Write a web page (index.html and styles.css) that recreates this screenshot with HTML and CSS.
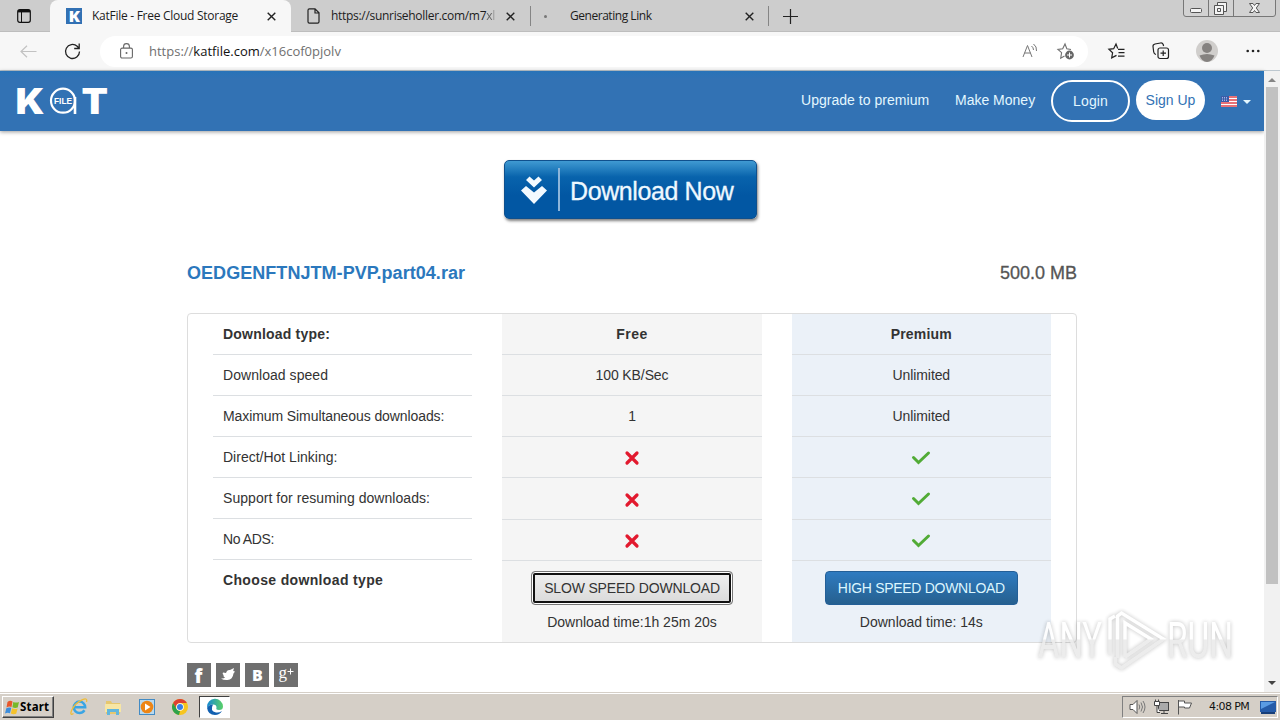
FILE: index.html
```html
<!DOCTYPE html>
<html lang="en">
<head>
<meta charset="utf-8">
<title>KatFile - Free Cloud Storage</title>
<link rel="stylesheet" href="styles.css">
</head>
<body>
<div class="tabstrip">
  <svg class="tab-actions" width="14" height="14" viewBox="0 0 14 14"><rect x=".7" y=".7" width="12.600" height="12.600" rx="2" fill="none" stroke="#111" stroke-width="1.200"/><path d="M1 2.200h12" stroke="#111" stroke-width="2.400"/><path d="M4.500 3v10" stroke="#111" stroke-width="1"/></svg>
  <div class="tab tab-active">
    <svg class="favicon" width="16" height="16" viewBox="0 0 16 16"><rect width="16" height="16" fill="#3271b4"/><text x="2.400" y="14" font-family="Open Sans" font-weight="800" font-size="16" textLength="11.500" lengthAdjust="spacingAndGlyphs" fill="#fff">K</text></svg>
    <span class="tab-title t1">KatFile - Free Cloud Storage</span>
    <svg class="x" width="9" height="9" viewBox="0 0 9 9"><path d="M.7.7l7.6 7.6M8.3.7L.7 8.3"/></svg>
  </div>
  <div class="tab tab-two">
    <svg class="favicon doc" width="13" height="16" viewBox="0 0 13 16"><path d="M1 2.2Q1 .8 2.400.8H8l4 4v9q0 1.400-1.400 1.400H2.400Q1 15.200 1 13.800zM8 1v4h4" fill="none" stroke="#222" stroke-width="1.200"/></svg>
    <span class="tab-title t2">https://sunriseholler.com/m7<span class="fade1">x</span><span class="fade2">l</span></span>
    <svg class="x" width="9" height="9" viewBox="0 0 9 9"><path d="M.7.7l7.6 7.6M8.3.7L.7 8.3"/></svg>
  </div>
  <div class="tab tab-three">
    <span class="loading-dot"></span>
    <span class="tab-title t3">Generating Link</span>
    <svg class="x" width="9" height="9" viewBox="0 0 9 9"><path d="M.7.7l7.6 7.6M8.3.7L.7 8.3"/></svg>
  </div>
  <svg class="newtab" width="15" height="15" viewBox="0 0 15 15"><path d="M7.500 0v15M0 7.500h15" stroke="#222" stroke-width="1.200"/></svg>
  <svg class="win" width="94" height="18" viewBox="0 0 94 18"><path d="M.5 0v14q0 2.500 2.500 2.500h87q2.500 0 2.500-2.500V0M25.500 0v16M50.500 0v16" fill="#d2d2d2" stroke="#777"/><g fill="#f4f4f4" stroke="#555"><rect x="7.500" y="8.500" width="11" height="4" rx="1"/><path d="M34.500 2.500h9v9h-9z"/><path d="M31.500 5.500h9v9h-9z"/><path d="M34.500 8.500h3v3h-3z"/><path d="M66.500 3.500h3.500l1.500 2 1.500-2h3.500l-3.200 4.500 3.200 4.500h-3.500l-1.500-2-1.500 2h-3.500l3.200-4.500z"/></g></svg>
</div>
<div class="toolbar">
  <svg class="back" width="17" height="13" viewBox="0 0 17 13"><path d="M7 .7L1 6.500l6 5.800M1 6.500h15.500" fill="none" stroke="#c2c2c2" stroke-width="1.200"/></svg>
  <svg class="reload" width="17" height="17" viewBox="0 0 17 17"><path d="M15.500 8.500a7 7 0 1 1-2.300-5.200L15 5.200M15.200.5v5h-5" fill="none" stroke="#222" stroke-width="1.300"/></svg>
  <div class="address">
    <svg class="lock" width="13" height="16" viewBox="0 0 13 16"><rect x=".6" y="5.100" width="11.800" height="9.900" rx="1.500" fill="none" stroke="#666" stroke-width="1.100"/><path d="M3.600 5V3.500a2.900 2.900 0 0 1 5.800 0V5" fill="none" stroke="#666" stroke-width="1.100"/><circle cx="6.500" cy="10" r="1" fill="#666"/></svg>
    <span class="url">https://<b>katfile.com</b>/x16cof0pjolv</span>
    <svg class="read" width="17" height="16" viewBox="0 0 17 16" fill="none" stroke="#777"><path d="M1 14L5.500 2.500 10 14M2.500 10h6M9.500 3q2 1.500 2 4M11.500 1q3.500 2.500 3 7"/></svg>
    <svg class="favadd" width="18" height="17" viewBox="0 0 18 17"><path d="M14 6.500l-4.200-.7L8 1 5.700 5.700.9 6.400l3.700 3.300-.9 5.500L7.500 13" fill="none" stroke="#707070" stroke-width="1.100"/><circle cx="12.500" cy="12" r="4.400" fill="#666"/><path d="M10 12h5M12.500 9.500v5" stroke="#fff"/></svg>
  </div>
  <svg class="favs" width="18" height="17" viewBox="0 0 18 17" fill="none" stroke="#222" stroke-width="1.200"><path d="M9.700 5.500L8 1 5.700 5.700.9 6.300l3.700 3.400-.9 5.200 4.800-2.500M10 6.300h6.500M10.500 9.700h6M10 13.100h6.500"/></svg>
  <svg class="collections" width="18" height="18" viewBox="0 0 18 18" fill="none" stroke="#222" stroke-width="1.200"><rect x="6" y="6" width="10.500" height="10.500" rx="2"/><path d="M11.200 8.500v5.500M8.500 11.200H14M4 12.500Q2 12 1.700 10L1 4.500Q.8 2.500 3 2L8.500 1q2-.3 2.700 1.500l.4 1.500"/></svg>
  <svg class="avatar" width="22" height="22" viewBox="0 0 22 22"><circle cx="11" cy="11" r="11" fill="#d0cecc"/><circle cx="11" cy="8" r="5" fill="#858280"/><path d="M3.500 15.500q7.500-3 15 0-2.500 6.500-7.500 6.500t-7.500-6.500" fill="#858280"/></svg>
  <svg class="dots" width="14" height="4" viewBox="0 0 14 4" fill="#222"><circle cx="1.700" cy="2" r="1.300"/><circle cx="7" cy="2" r="1.300"/><circle cx="12.300" cy="2" r="1.300"/></svg>
</div>
<div class="viewport">
  <div class="page">
    <div class="nav">
      <svg class="logo" width="92" height="60" viewBox="0 -15 92 60" fill="#fff"><text x="-.5" y="28" font-family="Inter" font-weight="900" font-size="36" textLength="29" lengthAdjust="spacingAndGlyphs">K</text><circle cx="47" cy="14.700" r="12" fill="none" stroke="#fff" stroke-width="2.200"/><path d="M59 11v17" stroke="#fff" stroke-width="2.600"/><text x="38" y="18" font-family="Liberation Sans" font-weight="700" font-size="8.500" textLength="18" lengthAdjust="spacingAndGlyphs">FILE</text><text x="65.500" y="28" font-family="Inter" font-weight="900" font-size="36" textLength="26.500" lengthAdjust="spacingAndGlyphs">T</text></svg>
      <a class="nl n1">Upgrade to premium</a>
      <a class="nl n2">Make Money</a>
      <a class="login">Login</a>
      <a class="signup">Sign Up</a>
      <svg class="flag" width="16" height="11" viewBox="0 0 16 11"><rect width="16" height="11" fill="#fff"/><path d="M0 1h16M0 4h16M0 7h16M0 10h16" stroke="#e0444b" stroke-width="1.500"/><rect width="8" height="6" fill="#3c5ca8"/><path d="M1 1.500h6M1 3h6M1 4.500h6" stroke="#cfdcff" stroke-width=".7" stroke-dasharray="1 1"/></svg>
      <span class="caret"></span>
    </div>
    <div class="content">
      <a class="dlnow">
        <svg width="28" height="32" viewBox="0 0 28 32" fill="#f3faff"><path d="M6 6L9.500 2.500l4.500 4 4.500-4L22 6l-8 7.500z"/><path d="M1 16.500L6 12l8 6.500 8-6.500 5 4.500L14 30z"/></svg>
        <span class="dlsep"></span><span class="dltext">Download Now</span>
      </a>
      <div class="filerow"><span class="fname">OEDGENFTNJTM-PVP.part04.rar</span><span class="fsize">500.0 MB</span></div>
      <div class="card">
        <div class="col labels">
          <div class="row head">Download type:</div><div class="row r-speed">Download speed</div><div class="row r-max">Maximum Simultaneous downloads:</div><div class="row r-link">Direct/Hot Linking:</div><div class="row r-resume">Support for resuming downloads:</div><div class="row r-ads">No ADS:</div><div class="row last">Choose download type</div>
        </div>
        <div class="col free">
          <div class="row head wide">Free</div><div class="row">100 KB/Sec</div><div class="row">1</div>
          <div class="row"><svg class="no" viewBox="0 0 14 14"><path d="M2 2l10 10M12 2L2 12"/></svg></div>
          <div class="row tall"><svg class="no" viewBox="0 0 14 14"><path d="M2 2l10 10M12 2L2 12"/></svg></div>
          <div class="row"><svg class="no" viewBox="0 0 14 14"><path d="M2 2l10 10M12 2L2 12"/></svg></div>
          <div class="choose"><a class="slow">SLOW SPEED DOWNLOAD</a><span class="time">Download time:1h 25m 20s</span></div>
        </div>
        <div class="col prem">
          <div class="row head">Premium</div><div class="row">Unlimited</div><div class="row">Unlimited</div>
          <div class="row"><svg class="yes" viewBox="0 0 18 14"><path d="M1.500 6.500l5 5L16.500 2"/></svg></div>
          <div class="row tall"><svg class="yes" viewBox="0 0 18 14"><path d="M1.500 6.500l5 5L16.500 2"/></svg></div>
          <div class="row"><svg class="yes" viewBox="0 0 18 14"><path d="M1.500 6.500l5 5L16.500 2"/></svg></div>
          <div class="choose"><a class="high">HIGH SPEED DOWNLOAD</a><span class="time">Download time: 14s</span></div>
        </div>
      </div>
      <div class="social">
        <span class="sq"><svg width="24" height="24" viewBox="0 0 24 24"><text x="7.500" y="19.500" font-family="Open Sans" font-weight="800" font-size="19" fill="#fff">f</text></svg></span>
        <span class="sq"><svg width="24" height="24" viewBox="0 0 24 24"><path d="M5 15.500q3 .2 4-1-2-1-1.500-2.500-1.500-1.500-.5-2.500l3 .5Q11 6.500 14 7l4-2-.8 3 1.800.5-1.500 2q-.8 6-6 6.500-4 .3-6.500-1.500" fill="#fff"/></svg></span>
        <span class="sq"><svg width="24" height="24" viewBox="0 0 24 24"><text x="7" y="18" font-family="Open Sans" font-weight="800" font-size="16" fill="#fff">B</text></svg></span>
        <span class="sq"><svg width="24" height="24" viewBox="0 0 24 24" fill="#fff"><text x="4.500" y="15" font-family="Liberation Serif" font-size="17" textLength="8.500" lengthAdjust="spacingAndGlyphs">g</text><path d="M16.500 5.500v6M13.500 8.500h6" stroke="#fff"/></svg></span>
      </div>
    </div>
  </div>
  <div class="scrollbar"><span class="up"></span><span class="thumb"></span><span class="down"></span></div>
</div>
<div class="taskbar">
  <div class="start"><svg width="15" height="15" viewBox="0 0 15 15"><path d="M2.500 2q2.500-2 5-.5L6.500 7Q4 6 1.500 7.500z" fill="#e8572b"/><path d="M8.300 2q3 1.200 5.700 0l-1.300 5.500q-2.700 1-5.300-.2z" fill="#77b82a"/><path d="M1.300 8.300q2.500-1.500 5-.5L5 13.200q-2.500-1.200-5 .3z" fill="#3c8ddc"/><path d="M7.100 8.200q2.900 1.300 5.500.2l-1.400 5.300q-2.700 1-5.400-.2z" fill="#f5c22b"/></svg><b>Start</b></div>
  <svg class="ql ie" width="18" height="18" viewBox="0 0 18 18" fill="none"><path d="M14.500 12.200Q12.500 15 9.500 15a5.700 5.700 0 1 1 5.700-5.700H4.500" stroke="#3aa5e4" stroke-width="2.500"/><path d="M3.500 15.500Q-.5 18 1.500 12.500 5 5 12.500 1.600q5.500-2 4 2.400" stroke="#efbd38" stroke-width="1.300"/></svg>
  <svg class="ql" width="18" height="18" viewBox="0 0 18 18"><path d="M2 3h5l1 2h8v11H2z" fill="#e6c76e"/><path d="M1 6h16v8H1z" fill="#f7e6a4"/><path d="M3 17v-6h12v6h-3v-3H6v3z" fill="#62b6dc"/></svg>
  <svg class="ql" width="18" height="18" viewBox="0 0 18 18"><rect x="1.500" y="1.500" width="15" height="15" fill="#b9d9ee" stroke="#438bc4"/><circle cx="9" cy="9" r="6.300" fill="#ed8515"/><path d="M7 5.500l5.500 3.500L7 12.500z" fill="#fff"/></svg>
  <svg class="ql" width="16" height="16" viewBox="0 0 16 16"><circle cx="8" cy="8" r="8" fill="#f7c51e"/><path d="M1.100 4a8 8 0 0 1 13.800 0H8a4 4 0 0 0-3.500 6z" fill="#de4032"/><path d="M1.100 4l3.500 6A4 4 0 0 0 8 12l-1 4A8 8 0 0 1 1.100 4" fill="#2ca24c"/><circle cx="8" cy="8" r="3.800" fill="#fff"/><circle cx="8" cy="8" r="3" fill="#377fe8"/></svg>
  <div class="task"><svg width="16" height="16" viewBox="0 0 16 16"><defs><linearGradient id="eg"><stop stop-color="#1789d4"/><stop offset="1" stop-color="#5ad167"/></linearGradient></defs><path d="M0 8a8 8 0 0 1 16-.5Q16 11 12 11q-3.500 0-2.500-2.500 0-3-3.500-3Q1.500 5.500 0 9z" fill="url(#eg)"/><path d="M.1 9Q1.500 5.500 6 5.500 2.500 12 9 13.500q3 .5 6-1.500-2.500 4-7 4-7 0-7.900-7" fill="#1260b0"/></svg></div>
  <div class="tray">
    <svg width="17" height="16" viewBox="0 0 17 16" fill="none" stroke="#555"><path d="M1 5.500h3L8 1.500v13l-4-4H1z" fill="#fff"/><path d="M10 5.500q1.500 2.500 0 5M12 3.500q3 4.500 0 9M14 2q4 6 0 12" stroke="#777"/></svg>
    <svg class="net" width="17" height="16" viewBox="0 0 17 16" stroke="#444"><rect x="5.500" y="3.500" width="10" height="8" fill="#aaa"/><path d="M8 14.500h7M11 12v2.500"/><path d="M1.500 2.500h5v4h-5zM2.500.5v2M5.500.5v2M4 7v6.500h3" fill="#fff"/></svg>
    <svg class="pennant" width="16" height="16" viewBox="0 0 16 16"><path d="M1.500 1v14.500M1.500 2h6v2h7l-2 5H7.500V8h-6" fill="#fff" stroke="#555"/></svg>
    <span class="clock">4:08 PM</span>
    <svg class="desk" width="16" height="13" viewBox="0 0 16 13"><path d="M0 0h16v11H0z" fill="#255ba8"/><path d="M1 1h14L1 8z" fill="#5a9be3"/><path d="M1 12h14" stroke="#173e78" stroke-width="2"/></svg>
  </div>
</div>
<svg class="watermark" width="204" height="70" viewBox="0 0 204 70">
  <defs><linearGradient id="wm" x1="0" y1="12" x2="0" y2="58" gradientUnits="userSpaceOnUse"><stop offset=".5" stop-color="#fff"/><stop offset=".52" stop-color="#ebebeb"/></linearGradient></defs>
  <g fill="url(#wm)" font-family="Roboto" font-weight="400" font-size="50"><text x="4" y="54" textLength="64" lengthAdjust="spacingAndGlyphs">ANY</text><text x="133" y="54" textLength="66" lengthAdjust="spacingAndGlyphs">RUN</text></g>
  <path d="M76 51V15l5-3M81.500 53V60l6 4 42-29-42-26-4 3V54M91 53V19l26 16-26 18" fill="none" stroke="url(#wm)" stroke-width="3.500"/>
</svg>
</body>
</html>
```
FILE: styles.css
```css
*{box-sizing:border-box}
body{margin:0;width:1280px;height:720px;overflow:hidden;display:flex;flex-direction:column;background:#fff;font-family:"Liberation Sans",Arial,sans-serif;font-size:14px;color:#333}
svg{flex:none;display:block;overflow:visible}
.tabstrip{flex:none;height:32px;background:#cdcdcd;display:flex;align-items:center;font-family:"Open Sans",sans-serif;font-size:12px;color:#1c1c1c;box-shadow:inset 0 -1px #bdbdbd}
.tab-actions{margin:0 13px 0 17px}
.tab{display:flex;align-items:center;height:32px;white-space:nowrap}
.tab-active{width:241px;margin-left:6px;padding:0 15px 0 16px;background:#f7f7f7;border-radius:8px 8px 0 0}
.tab-title{flex:1;margin-left:10px;line-height:16px}
.t1{letter-spacing:-.27px}
.t2{letter-spacing:-.3px}
.t3{letter-spacing:-.46px}
.x{stroke:#222;stroke-width:1.4;fill:none}
.tab-two{width:239px;padding:0 15px 0 16px}
.tab-two .tab-title{margin-left:11px}
.fade1{opacity:.6}
.fade2{opacity:.3}
.tab-three{width:239px;padding:0 14px;border:solid #858585;border-width:0 1px;height:20px}
.loading-dot{width:3px;height:3px;background:#777;border-radius:50%;margin-left:-1px}
.tab-three .tab-title{margin-left:23px}
.newtab{margin-left:14px}
.win{margin-left:auto;margin-right:3px;align-self:flex-start}
.toolbar{flex:none;height:39px;background:#f7f7f7;display:flex;align-items:center;border-bottom:1px solid #bcc7cf}
.back{margin-left:20px}
.reload{margin-left:27px}
.address{width:988px;height:31px;margin-left:19px;border-radius:16px;background:#fff;display:flex;align-items:center;padding-left:20px}
.url{font:13px/18px "Open Sans",sans-serif;color:#707070;margin-left:16px;width:873px}
.url b{font-weight:400;color:#111}
.favadd{margin-left:18px}
.favs{margin-left:20px}
.collections{margin-left:26px}
.avatar{margin-left:26px}
.dots{margin-left:28px}
.viewport{flex:none;height:621px;display:flex}
.page{width:1264px;height:621px;background:#fff}
.nav{height:60px;background:linear-gradient(#2873b8,#3272b4 8px);box-shadow:0 1px 4px rgba(0,0,0,.4);display:flex;align-items:center;color:#e3f7ff;font-size:14px}
.logo{margin-left:16px}
.nl{margin-bottom:2px;line-height:18px;white-space:nowrap}
.n1{margin-left:693px;width:129px;letter-spacing:.03px}
.n2{margin-left:25px;width:81px;letter-spacing:0}
.login{margin-left:15px;width:79px;height:42px;line-height:38px;border:2px solid #fff;border-radius:21px;text-align:center;letter-spacing:.1px}
.signup{margin-left:6px;width:69px;height:40px;line-height:40px;margin-bottom:2px;border-radius:20px;background:#fff;color:#3272b4;text-align:center;letter-spacing:0}
.flag{margin-left:16px;margin-top:1px}
.caret{margin-left:6px;margin-top:2px;border:4px solid transparent;border-top-color:#e3f7ff;border-bottom:0}
.content{width:890px;margin-left:187px}
.dlnow{width:253px;height:59px;margin:29px 0 0 317px;display:flex;align-items:center;border-radius:5px;border:1px solid #0f508d;background:linear-gradient(#409ad2,#0863ac 28%,#0257a3 60%,#0257a3);box-shadow:1px 2px 3px rgba(0,0,0,.5);color:#edf8ff;font-size:25px;padding-left:15px}
.dlsep{width:2px;height:43px;background:#8db5da;margin-left:10px}
.dltext{margin-left:10px;padding-top:3px;white-space:nowrap;letter-spacing:-.4px;-webkit-text-stroke:.3px #edf8ff}
.filerow{margin-top:43px;height:22px;display:flex;justify-content:space-between;line-height:22px;font-size:18px}
.fname{font-weight:700;color:#2b78bd;letter-spacing:.05px}
.fsize{color:#555;-webkit-text-stroke:.3px #555}
.card{margin-top:29px;height:330px;border:1px solid #ddd;border-radius:4px;padding:0 25px;display:grid;grid-template-columns:1fr 1fr 1fr;gap:30px}
.row{height:41px;border-bottom:1px solid #dcdfe2;line-height:40px;text-align:center;letter-spacing:-.1px;white-space:nowrap}
.labels .row{text-align:left;padding-left:10px}
.labels .last{border:0}
.r-speed{letter-spacing:.05px}
.r-max{letter-spacing:-.09px}
.r-link{letter-spacing:0}
.r-resume{letter-spacing:.05px}
.r-ads{letter-spacing:-.4px}
.head{font-weight:700;letter-spacing:.2px}
.wide{letter-spacing:.5px}
.last{font-weight:700;letter-spacing:.35px}
.free{background:#f5f5f5}
.prem{background:#ebf1f8}
.free .row,.prem .row{display:flex;align-items:center;justify-content:center}
.free .tall,.prem .tall{height:42px}
.no{width:14px;height:14px;margin-top:2px;fill:none;stroke:#e2192e;stroke-width:3.2;stroke-linecap:round}
.yes{width:18px;height:14px;margin-top:1px;fill:none;stroke:#51ab36;stroke-width:3;stroke-linecap:round}
.choose{display:flex;flex-direction:column;align-items:center;padding-top:10px}
.slow,.high{height:34px;border-radius:4px;text-align:center;white-space:nowrap}
.slow{width:202px;border:1px solid #777;background:linear-gradient(#f0f0f0,#d9d9d9);box-shadow:inset 0 0 0 1px #fff,inset 0 0 0 3px #111;line-height:33px;letter-spacing:-.17px}
.high{width:193px;border:1px solid #245f97;background:linear-gradient(#2f7bc0,#26608f);color:#dcf6ff;line-height:33px;letter-spacing:-.3px}
.time{margin-top:8px;line-height:18px}
.social{margin-top:20px;display:flex;gap:5px}
.sq{width:24px;height:24px;background:#6f6f6f}
.scrollbar{width:16px;background:#f1f1f1;display:flex;flex-direction:column;align-items:center}
.up{border:4px solid transparent;border-bottom-color:#858585;border-top:0;margin-top:7px}
.thumb{width:12px;height:497px;margin-top:5px;background:#c1c1c1}
.down{border:4px solid transparent;border-top-color:#444;border-bottom:0;margin-top:97px}
.taskbar{flex:none;height:28px;background:#d5cfc7;box-shadow:inset 0 1px #d5cfc7,inset 0 2px #fff;display:flex;align-items:center;padding-top:2px}
.start{width:52px;height:22px;margin-left:2px;border:1px solid;border-color:#fff #404040 #404040 #fff;box-shadow:inset -1px -1px #808080;display:flex;align-items:center;padding-left:2px;font:12px/18px "DejaVu Sans",sans-serif;color:#000}
.start b{font-family:"Noto Sans",sans-serif;font-size:11.500px;letter-spacing:.15px}
.ql{margin-left:16px}
.task{width:31px;height:22px;margin-left:11px;background:#fff;border:1px solid #fff;border-top-color:#404040;border-left-color:#404040;display:flex;align-items:center;justify-content:center}
.tray{margin-left:auto;margin-right:2px;width:156px;height:22px;border:1px solid #fff;border-top-color:#808080;border-left-color:#808080;display:flex;align-items:center;padding-left:6px}
.net{margin-left:7px}
.pennant{margin-left:7px}
.clock{margin-left:16px;width:41px;font:11px/16px "DejaVu Sans",sans-serif;letter-spacing:-.6px;white-space:nowrap;color:#111}
.desk{margin-left:10px}
.watermark{position:absolute;left:1034px;top:604px;filter:drop-shadow(0 0 2px rgba(0,0,0,.28));opacity:.9}
```
